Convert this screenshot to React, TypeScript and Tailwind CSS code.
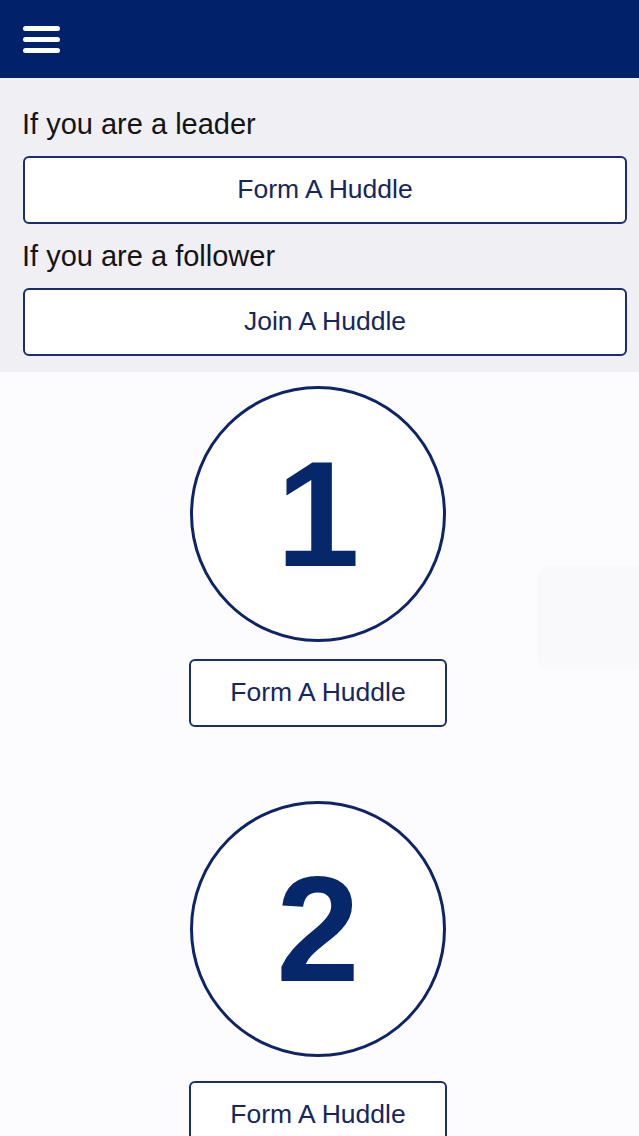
import React from 'react';

const navy = 'border-[#1c2d6b]';

function OutlineButton({ label, wide }: { label: string; wide?: boolean }) {
  return (
    <button
      className={`flex h-[68px] items-center justify-center rounded-[6px] border-2 ${navy} bg-white text-[26.5px] text-[#17275e] ${
        wide ? 'w-[604px]' : 'w-[258px]'
      }`}
    >
      {label}
    </button>
  );
}

function StepCircle({ n }: { n: string }) {
  return (
    <div className="flex h-[256px] w-[256px] items-center justify-center rounded-full border-[3px] border-[#0f2466] bg-white">
      <span className="text-[150px] font-bold leading-none text-[#06276a]">{n}</span>
    </div>
  );
}

export default function App() {
  return (
    <div
      className="relative h-[1136px] w-[639px] overflow-hidden bg-[#fcfcfe]"
      style={{ fontFamily: '"Liberation Sans", Arial, sans-serif' }}
    >
      {/* Top bar */}
      <header className="flex h-[78px] items-center bg-[#01226b] pl-[23px]">
        <div className="flex w-[37px] flex-col gap-[6px] pt-[1px]">
          <span className="h-[5px] rounded-full bg-white" />
          <span className="h-[5px] rounded-full bg-white" />
          <span className="h-[5px] rounded-full bg-white" />
        </div>
      </header>

      {/* Role choice */}
      <section className="flex flex-col bg-[#efeff4] pb-[16px] pl-[23px] pr-[12px] pt-[29px]">
        <p className="-ml-[1px] text-[29px] leading-[34px] text-[#141414]">If you are a leader</p>
        <div className="mt-[15px]">
          <OutlineButton label="Form A Huddle" wide />
        </div>
        <p className="-ml-[1px] mt-[15px] text-[29px] leading-[34px] text-[#141414]">If you are a follower</p>
        <div className="mt-[15px]">
          <OutlineButton label="Join A Huddle" wide />
        </div>
      </section>

      {/* Steps */}
      <main className="flex flex-col items-center pr-[3px]">
        <div className="mt-[14px]">
          <StepCircle n="1" />
        </div>
        <div className="mt-[17px]">
          <OutlineButton label="Form A Huddle" />
        </div>
        <div className="mt-[74px]">
          <StepCircle n="2" />
        </div>
        <div className="mt-[24px]">
          <OutlineButton label="Form A Huddle" />
        </div>
      </main>

      {/* faint floating touch overlay */}
      <div className="absolute left-[537px] top-[566px] h-[104px] w-[110px] rounded-[14px] bg-[#f7f6fa]/60" />
    </div>
  );
}
